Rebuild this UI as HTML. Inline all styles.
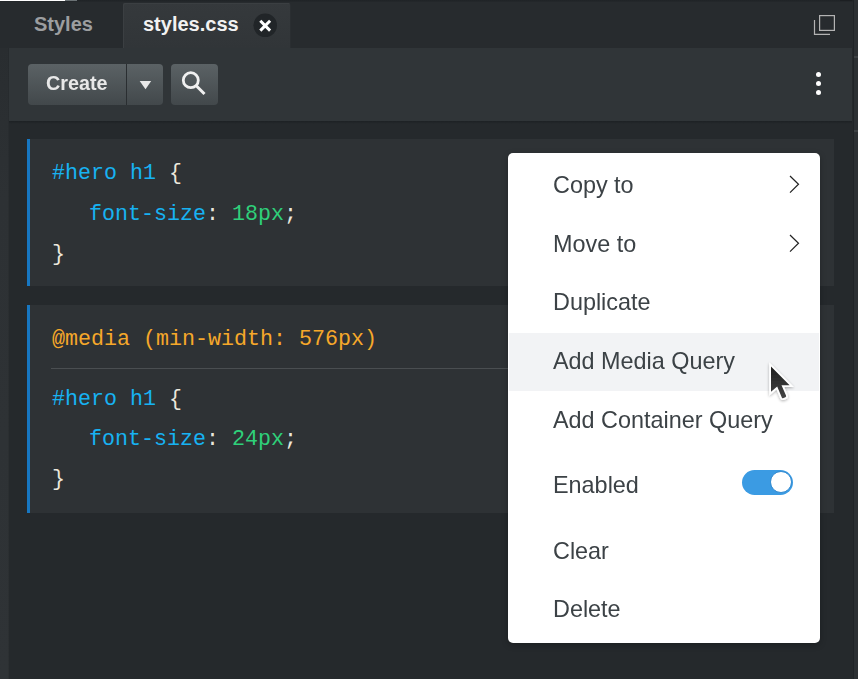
<!DOCTYPE html>
<html><head><meta charset="utf-8">
<style>
html,body{margin:0;padding:0;}
body{width:858px;height:679px;overflow:hidden;position:relative;background:#25292c;font-family:"Liberation Sans",sans-serif;}
.a{position:absolute;}
.tabbar{left:0;top:0;width:858px;height:48px;background:#272b2e;}
.topline{left:0;top:0;width:858px;height:2px;background:linear-gradient(#1f2326,#24282b);}
.leftstrip{left:0;top:48px;width:9px;height:631px;background:linear-gradient(#292d30,#2d3134 150px,#2f3336);box-shadow:inset -1px 0 0 rgba(0,0,0,0.06);}
.rightstrip{left:853px;top:0;width:5px;height:679px;background:#2c3033;border-left:1px solid #202427;box-sizing:border-box;}
.tab{left:123px;top:3px;width:168px;height:45px;background:linear-gradient(#35393c,#313538);border-right:1px solid #2a2e31;box-sizing:border-box;border-radius:2px 2px 0 0;box-shadow:inset 1px 1px 0 #3b3f42;}
.toolbar{left:9px;top:48px;width:843px;height:73px;background:#303538;}
.content{left:9px;top:121px;width:843px;height:558px;background:#25292c;}
.tt{white-space:nowrap;line-height:20px;height:20px;}
.btn{top:64px;height:41px;border-radius:4px;background:linear-gradient(#5b6265,#42484b);}
.block{left:27px;width:807px;background:#2e3235;border-left:3px solid #1777c2;box-sizing:border-box;}
.code{font-family:"Liberation Mono",monospace;font-size:21.67px;line-height:20px;height:20px;white-space:pre;}
.bl{color:#17b2f2}.gr{color:#2fd07a}.wh{color:#ebe7dc}.or{color:#f6a82a}
.menu{left:508px;top:153px;width:312px;height:490px;background:#fff;border-radius:5px;box-shadow:0 2px 6px rgba(0,0,0,0.25);}
.mi{left:553.3px;font-size:23.4px;color:#3c4246;will-change:transform;white-space:nowrap;line-height:20px;height:20px;}
</style></head><body>
<div class="a tabbar"></div>
<div class="a topline"></div>
<div class="a" style="left:0;top:0;width:65px;height:1px;background:#fff"></div>
<div class="a" style="left:65px;top:0;width:12px;height:1px;background:#6b7275"></div>
<div class="a leftstrip"></div>
<div class="a rightstrip"></div>
<div class="a" style="left:854px;top:56px;width:4px;height:2px;background:#3d4144"></div>
<div class="a" style="left:854px;top:130px;width:4px;height:2px;background:#3d4144"></div>
<div class="a" style="left:840px;top:0;width:12px;height:1px;background:#1c1f22"></div>
<div class="a tab"></div>
<div class="a toolbar"></div>
<div class="a content"></div>
<div class="a" style="left:9px;top:121px;width:843px;height:3px;background:linear-gradient(#1d2124,rgba(37,41,44,0))"></div>

<div class="a tt" style="left:34px;top:14px;font-size:20px;font-weight:bold;color:#9c9ea0">Styles</div>
<div class="a tt" style="left:143px;top:14px;font-size:20px;font-weight:bold;color:#f2f2f2">styles.css</div>
<svg class="a" style="left:250px;top:10px" width="30" height="30" viewBox="250 10 30 30"><circle cx="265.2" cy="25.3" r="11.8" fill="#212528"/><path d="M260.3 20.8L270.1 30.6M270.1 20.8L260.3 30.6" stroke="#fff" stroke-width="3"/></svg>

<svg class="a" style="left:805px;top:5px" width="40" height="40" viewBox="805 5 40 40"><rect x="819.6" y="15.6" width="14.8" height="14.8" fill="none" stroke="#b3b3b3" stroke-width="1.2"/><path d="M814.5 20V34.4H830" fill="none" stroke="#b3b3b3" stroke-width="1.2"/></svg>

<!-- toolbar -->
<div class="a btn" style="left:28px;width:135px"></div>
<div class="a" style="left:126px;top:64px;width:1px;height:41px;background:#2a2e31"></div>
<div class="a tt" style="left:46px;top:73px;font-size:19.8px;font-weight:bold;color:#e8e8e8;will-change:transform">Create</div>
<svg class="a" style="left:120px;top:60px" width="50" height="50" viewBox="120 60 50 50"><path d="M139.7 81H151.2L145.5 89.2Z" fill="#e8e8e8"/></svg>
<div class="a btn" style="left:171px;width:47px"></div>
<svg class="a" style="left:170px;top:60px" width="50" height="50" viewBox="170 60 50 50"><circle cx="190.8" cy="80.2" r="7.5" fill="none" stroke="#f0f0f0" stroke-width="2.8"/><path d="M196 85.5L204.5 94" stroke="#f0f0f0" stroke-width="3"/></svg>
<div class="a" style="left:815.7px;top:71.8px;width:5.4px;height:5.4px;border-radius:50%;background:#fff"></div>
<div class="a" style="left:815.7px;top:80.7px;width:5.4px;height:5.4px;border-radius:50%;background:#fff"></div>
<div class="a" style="left:815.7px;top:89.7px;width:5.4px;height:5.4px;border-radius:50%;background:#fff"></div>

<!-- code blocks -->
<div class="a block" style="top:139px;height:147px"></div>
<div class="a block" style="top:305px;height:208px"></div>
<div class="a" style="left:51px;top:368px;width:759px;height:1px;background:#4a4e51"></div>

<div class="a code" style="left:52px;top:164px"><span class="bl">#hero h1 </span><span class="wh">{</span></div>
<div class="a code" style="left:89px;top:205px"><span class="bl">font-size</span><span class="wh">: </span><span class="gr">18px</span><span class="wh">;</span></div>
<div class="a code" style="left:52px;top:245px"><span class="wh">}</span></div>

<div class="a code" style="left:52px;top:330px"><span class="or">@media (min-width: 576px)</span></div>
<div class="a code" style="left:52px;top:390px"><span class="bl">#hero h1 </span><span class="wh">{</span></div>
<div class="a code" style="left:89px;top:430px"><span class="bl">font-size</span><span class="wh">: </span><span class="gr">24px</span><span class="wh">;</span></div>
<div class="a code" style="left:52px;top:470px"><span class="wh">}</span></div>

<!-- menu -->
<div class="a menu"></div>
<div class="a" style="left:509px;top:333px;width:310px;height:58px;background:#f2f3f5"></div>
<div class="a mi" style="top:175px">Copy to</div>
<div class="a mi" style="top:234px">Move to</div>
<div class="a mi" style="top:292px">Duplicate</div>
<div class="a mi" style="top:351px">Add Media Query</div>
<div class="a mi" style="top:410px">Add Container Query</div>
<div class="a mi" style="top:475px">Enabled</div>
<div class="a mi" style="top:541px">Clear</div>
<div class="a mi" style="top:599px">Delete</div>
<svg class="a" style="left:770px;top:165px" width="40" height="100" viewBox="770 165 40 100"><path d="M790 176L798.5 184.3L790 192.6M790 235L798.5 243.3L790 251.6" fill="none" stroke="#222" stroke-width="1.2"/></svg>
<div class="a" style="left:742px;top:470px;width:51px;height:25px;border-radius:12.5px;background:#3b9be3"></div>
<div class="a" style="left:770px;top:470.8px;width:21.8px;height:21.8px;border-radius:50%;background:#fff;border:1.2px solid #2b86cf;box-sizing:border-box"></div>

<!-- cursor -->
<svg class="a" style="left:755px;top:350px;overflow:visible" width="45" height="60" viewBox="755 350 45 60"><defs><linearGradient id="cg" x1="0" y1="0" x2="0" y2="1"><stop offset="0" stop-color="#1f1f1f"/><stop offset="1" stop-color="#444"/></linearGradient><filter id="sh" x="-50%" y="-50%" width="200%" height="200%"><feGaussianBlur in="SourceAlpha" stdDeviation="1.4"/><feOffset dx="0.4" dy="1.2" result="b"/><feComponentTransfer><feFuncA type="linear" slope="0.32"/></feComponentTransfer><feMerge><feMergeNode/><feMergeNode in="SourceGraphic"/></feMerge></filter></defs><g filter="url(#sh)"><path d="M771 366.6V391.8L777.2 386.6L781.8 397.4Q782.4 398.6 783.6 398.1L785.4 397.3Q786.5 396.8 786 395.6L781.5 385.3H789.6Z" fill="#fff" stroke="#fff" stroke-width="3.6" stroke-linejoin="miter" stroke-miterlimit="5"/><path d="M771 366.6V391.8L777.2 386.6L781.8 397.4Q782.4 398.6 783.6 398.1L785.4 397.3Q786.5 396.8 786 395.6L781.5 385.3H789.6Z" fill="url(#cg)"/></g></svg>
</body></html>
